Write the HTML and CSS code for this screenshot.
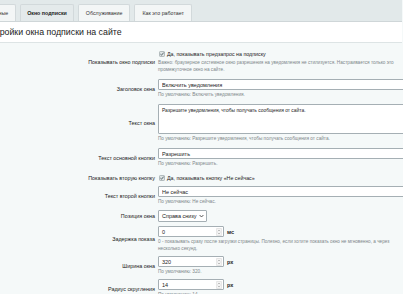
FILE: index.html
```html
<!DOCTYPE html>
<html lang="ru">
<head>
  <meta charset="UTF-8">
  <title>Настройки окна подписки на сайте</title>
  <link rel="stylesheet" href="styles.css">
</head>
<body>
  <div class="page">
    <div class="tabs">
      <div class="tab first">Основные</div>
      <div class="tab active">Окно подписки</div>
      <div class="tab">Обслуживание</div>
      <div class="tab">Как это работает</div>
    </div>
    <div class="title">Настройки окна подписки на сайте</div>
    <div class="form">
      <div class="row">
        <div class="label">Показывать окно подписки</div>
        <div class="field">
          <div class="check">
            <svg class="box" width="6" height="6" viewBox="0 0 6 6"><rect x="0.5" y="0.5" width="5" height="5" rx="0.8" fill="#dfe5e6" stroke="#8b979b" stroke-width="0.6"/><path d="M1.4 3.1 L2.5 4.2 L4.7 1.6" fill="none" stroke="#35454b" stroke-width="0.8"/></svg>
            <span>Да, показывать предзапрос на подписку</span>
          </div>
          <div class="hint">Важно: браузерное системное окно разрешения на уведомления не стилизуется. Настраивается только это промежуточное окно на сайте.</div>
        </div>
      </div>
      <div class="row">
        <div class="label">Заголовок окна</div>
        <div class="field">
          <input class="text" type="text" value="Включить уведомления">
          <div class="hint">По умолчанию: Включить уведомления.</div>
        </div>
      </div>
      <div class="row">
        <div class="label">Текст окна</div>
        <div class="field">
          <textarea class="area">Разрешите уведомления, чтобы получать сообщения от сайта.</textarea>
          <div class="hint">По умолчанию: Разрешите уведомления, чтобы получать сообщения от сайта.</div>
        </div>
      </div>
      <div class="row">
        <div class="label">Текст основной кнопки</div>
        <div class="field">
          <input class="text" type="text" value="Разрешить">
          <div class="hint">По умолчанию: Разрешить.</div>
        </div>
      </div>
      <div class="row check-row">
        <div class="label">Показывать вторую кнопку</div>
        <div class="field">
          <div class="check">
            <svg class="box" width="6" height="6" viewBox="0 0 6 6"><rect x="0.5" y="0.5" width="5" height="5" rx="0.8" fill="#dfe5e6" stroke="#8b979b" stroke-width="0.6"/><path d="M1.4 3.1 L2.5 4.2 L4.7 1.6" fill="none" stroke="#35454b" stroke-width="0.8"/></svg>
            <span>Да, показывать кнопку «Не сейчас»</span>
          </div>
        </div>
      </div>
      <div class="row">
        <div class="label">Текст второй кнопки</div>
        <div class="field">
          <input class="text" type="text" value="Не сейчас">
          <div class="hint">По умолчанию: Не сейчас.</div>
        </div>
      </div>
      <div class="row compact">
        <div class="label">Позиция окна</div>
        <div class="field">
          <div class="select">
            <span>Справа снизу</span>
            <svg width="5" height="4" viewBox="0 0 5 4"><path d="M0.6 1 L2.5 3 L4.4 1" fill="none" stroke="#333" stroke-width="0.8"/></svg>
          </div>
        </div>
      </div>
      <div class="row compact">
        <div class="label">Задержка показа</div>
        <div class="field">
          <div class="num-line">
            <div class="num"><span>0</span><svg class="spin" width="6" height="8" viewBox="0 0 6 8"><rect x="0.3" y="0.5" width="5.4" height="7" rx="0.6" fill="#f4f4f4" stroke="#d0d0d0" stroke-width="0.5"/><path d="M1.8 3.2 L3 2 L4.2 3.2 M1.8 4.8 L3 6 L4.2 4.8" fill="none" stroke="#8a8a8a" stroke-width="0.5"/></svg></div>
            <span class="unit">мс</span>
          </div>
          <div class="hint">0 - показывать сразу после загрузки страницы. Полезно, если хотите показать окно не мгновенно, а через несколько секунд.</div>
        </div>
      </div>
      <div class="row compact">
        <div class="label">Ширина окна</div>
        <div class="field">
          <div class="num-line">
            <div class="num"><span>320</span><svg class="spin" width="6" height="8" viewBox="0 0 6 8"><rect x="0.3" y="0.5" width="5.4" height="7" rx="0.6" fill="#f4f4f4" stroke="#d0d0d0" stroke-width="0.5"/><path d="M1.8 3.2 L3 2 L4.2 3.2 M1.8 4.8 L3 6 L4.2 4.8" fill="none" stroke="#8a8a8a" stroke-width="0.5"/></svg></div>
            <span class="unit">px</span>
          </div>
          <div class="hint">По умолчанию: 320.</div>
        </div>
      </div>
      <div class="row compact">
        <div class="label">Радиус скругления</div>
        <div class="field">
          <div class="num-line">
            <div class="num"><span>14</span><svg class="spin" width="6" height="8" viewBox="0 0 6 8"><rect x="0.3" y="0.5" width="5.4" height="7" rx="0.6" fill="#f4f4f4" stroke="#d0d0d0" stroke-width="0.5"/><path d="M1.8 3.2 L3 2 L4.2 3.2 M1.8 4.8 L3 6 L4.2 4.8" fill="none" stroke="#8a8a8a" stroke-width="0.5"/></svg></div>
            <span class="unit">px</span>
          </div>
          <div class="hint">По умолчанию: 14.</div>
        </div>
      </div>
    </div>
  </div>
</body>
</html>
```

FILE: styles.css
```css
html, body {
  margin: 0;
  padding: 0;
  height: 100%;
  overflow: hidden;
  background: #f5f9f9;
  font-family: 'Liberation Sans', Arial, sans-serif;
  color: #222;
}
.page {
  margin-left: -22px;
  width: 424px;
}

.tabs {
  display: flex;
  align-items: flex-end;
  gap: 4px;
  height: 21px;
  padding-left: 2px;
  background: #e2e9ea;
  border-bottom: 1px solid #cfd6d8;
}
.tab {
  height: 17px;
  padding: 0 7px;
  display: flex;
  align-items: center;
  font-size: 5.3px;
  color: #333;
  background: #f3f6f6;
  border: 1px solid #d2d9db;
  border-bottom: none;
  border-radius: 2px 2px 0 0;
  box-sizing: border-box;
}
.tab.first {
  margin-left: -5px;
}
.tab.active {
  padding: 0 6px;
  background: #e4eaeb;
  font-weight: bold;
  color: #222;
}

.title {
  height: 20px;
  line-height: 20px;
  padding-left: 2px;
  background: #fff;
  border-bottom: 1px solid #dde4e5;
  font-size: 8.8px;
  color: #222;
}

.form {
  padding-top: 4px;
}
.row {
  display: grid;
  grid-template-columns: 180px 1fr;
  padding: 3px 0;
}
.row.check-row {
  padding: 4px 0 1px;
}
.row.compact {
  padding: 2px 0;
}
.label {
  align-self: center;
  text-align: right;
  padding-right: 3px;
  font-size: 5.4px;
  color: #222;
}
.field {
  min-width: 0;
}
.check {
  display: flex;
  align-items: center;
  gap: 2px;
  height: 8px;
  padding-left: 1px;
  font-size: 5.3px;
  color: #222;
}
.hint {
  margin-top: 1px;
  font-size: 4.7px;
  line-height: 7px;
  color: #7e878a;
}
.text, .area {
  display: block;
  width: 262px;
  height: 11px;
  margin: 0;
  padding: 0 3px;
  box-sizing: border-box;
  border: 1px solid #a5afb4;
  border-radius: 1px;
  background: #fff;
  font-family: 'Liberation Sans', Arial, sans-serif;
  font-size: 5.5px;
  color: #222;
  outline: none;
}
.area {
  height: 30px;
  padding: 2px 3px;
  resize: none;
  font-size: 4.9px;
  line-height: 7px;
}
.select {
  width: 49px;
  height: 12px;
  padding: 0 2px 0 3px;
  box-sizing: border-box;
  display: flex;
  align-items: center;
  justify-content: space-between;
  border: 1px solid #a5afb4;
  border-radius: 1px;
  background: #fff;
  font-size: 5.5px;
}
.num-line {
  display: flex;
  align-items: center;
  gap: 3px;
}
.num {
  width: 66px;
  height: 11px;
  padding: 0 1px 0 3px;
  box-sizing: border-box;
  display: flex;
  align-items: center;
  justify-content: space-between;
  border: 1px solid #a5afb4;
  border-radius: 1px;
  background: #fff;
  font-size: 5.5px;
}
.unit {
  font-size: 5.5px;
  font-weight: bold;
}
```
